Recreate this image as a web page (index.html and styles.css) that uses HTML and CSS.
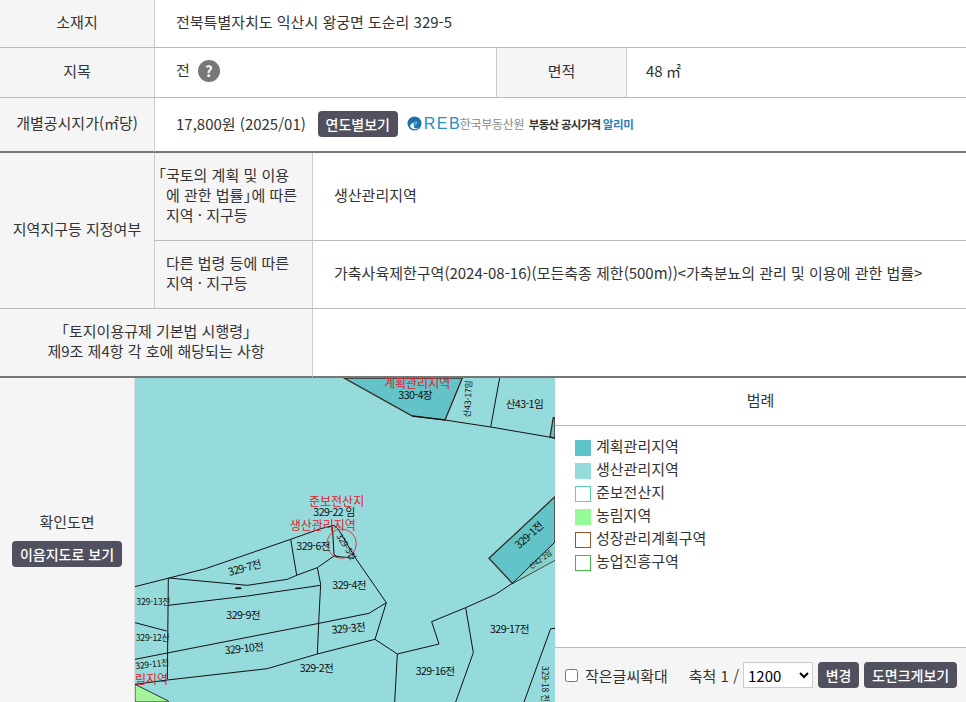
FILE: index.html
```html
<!DOCTYPE html>
<html lang="ko">
<head>
    <meta charset="UTF-8">
    <meta name="viewport" content="width=device-width, initial-scale=1.0">
    <title>토지이음</title>
    <link rel="stylesheet" href="styles.css">
</head>
<body>
    <table class="info info-top">
        <colgroup><col class="c1"><col class="c2"><col class="c3"><col></colgroup>
        <tr class="r1">
            <th>소재지</th>
            <td colspan="3">전북특별자치도 익산시 왕궁면 도순리 329-5</td>
        </tr>
        <tr class="r2">
            <th>지목</th>
            <td><span class="jimok">전</span><span class="help">?</span></td>
            <th>면적</th>
            <td class="last">48 ㎡</td>
        </tr>
        <tr class="r3">
            <th>개별공시지가(㎡당)</th>
            <td colspan="3">
                <div class="price">
                    <span>17,800원 (2025/01)</span>
                    <button class="btn btn-year">연도별보기</button>
                    <div class="logo">
                        <svg class="logo-mark" width="15" height="15" viewBox="0 0 30 30">
                            <circle cx="15" cy="15" r="14" fill="#1f6fa8"/>
                            <path d="M6 20c4-9 12-10 18-7-3-1-9 0-10 6s6 8 10 3c-3 6-14 7-18-2z" fill="#fff"/>
                            <circle cx="16" cy="15" r="4" fill="#3aa7d8"/>
                        </svg>
                        <span class="logo-reb">REB</span>
                        <span class="logo-name">한국부동산원</span>
                        <span class="logo-title">부동산 공시가격</span>
                        <span class="logo-blue">알리미</span>
                    </div>
                </div>
            </td>
        </tr>
    </table>

    <table class="info info-mid">
        <colgroup><col class="c1"><col class="c5"><col></colgroup>
        <tr class="r4">
            <th rowspan="2">지역지구등 지정여부</th>
            <th class="sub"><span class="hang">「</span>국토의 계획 및 이용<br>에 관한 법률<span class="tight">」</span>에 따른<br>지역 · 지구등</th>
            <td class="zone">생산관리지역</td>
        </tr>
        <tr class="r5">
            <th class="sub">다른 법령 등에 따른<br>지역 · 지구등</th>
            <td class="zone">가축사육제한구역(2024-08-16)(모든축종 제한(500m))&lt;가축분뇨의 관리 및 이용에 관한 법률&gt;</td>
        </tr>
        <tr class="r6">
            <th colspan="2">「토지이용규제 기본법 시행령」<br>제9조 제4항 각 호에 해당되는 사항</th>
            <td></td>
        </tr>
    </table>

    <div class="map-row">
        <div class="map-side">
            <div>확인도면</div>
            <button class="btn btn-side">이음지도로 보기</button>
        </div>
        <svg class="map" width="420" height="324" viewBox="3 6 1260 972">
            <rect x="3" y="6" width="1260" height="972" fill="#96dbdc"/>
            <!-- 계획관리지역 -->
            <polygon class="zone-dark" points="630,6 835,120 933,132 985,6"/>
            <polygon class="zone-dark" points="1065,547 1263,362 1263,552 1135,622"/>
            <polygon class="zone-sliver" points="1135,622 1263,498 1263,552"/>
            <polygon class="zone-dark" points="1258,125 1248,183 1263,187 1263,125"/>
            <polygon class="zone-green" points="3,925 103,975 103,978 3,978"/>
            <polyline class="edge" points="1135,622 1263,498"/>
            <!-- 필지 경계 -->
            <polyline class="lot" points="835,120 933,132 1070,153 1245,183 1263,186"/>
            <polyline class="lot" points="1097,6 1070,153"/>
            <polyline class="lot" points="3,632 105,606 215,578 470,490 560,458 600,448 612,458 665,547 757,680 723,790 790,834 915,804 893,737 995,695 1085,655 1135,622"/>
            <polyline class="lot" points="470,490 488,597"/>
            <polyline class="lot" points="105,606 340,628 460,610 490,597 550,575 600,540 660,547"/>
            <polyline class="lot" points="595,450 600,535 612,545"/>
            <polyline class="lot" points="550,575 560,625 555,720 550,834"/>
            <polyline class="lot" points="103,688 340,660 560,628"/>
            <polyline class="lot" points="103,606 100,910"/>
            <polyline class="lot" points="3,740 98,765"/>
            <polyline class="lot" points="3,850 555,742 705,712 757,680"/>
            <polyline class="lot" points="3,925 100,912 400,878 550,834 723,790"/>
            <polyline class="lot" points="790,834 782,978"/>
            <polyline class="lot" points="995,695 1018,830 965,978"/>
            <polyline class="lot" points="1263,757 1250,758 1170,978"/>
            <ellipse cx="313" cy="637" rx="10" ry="3" fill="#111"/>
            <circle class="mark" cx="623" cy="503" r="44"/>

            <text class="red" x="750" y="35">계획관리지역</text>
            <text class="red" x="525" y="390">준보전산지</text>
            <text class="red" x="467" y="463">생산관리지역</text>
            <text class="red" x="3" y="925">림지역</text>

            <text class="lbl" x="793" y="68">330-4장</text>
            <text class="lbl" x="538" y="420">329-22 임</text>
            <text class="lbl" x="487" y="521">329-6전</text>
            <text class="lbl" x="595" y="638">329-4전</text>
            <text class="lbl" x="277" y="728">329-9전</text>
            <text class="lbl" x="497" y="888">329-2전</text>
            <text class="lbl" x="845" y="897">329-16전</text>
            <text class="lbl" x="1068" y="770">329-17전</text>
            <text class="lbl" x="1115" y="95">산43-1임</text>
            <text class="lbl" transform="translate(286,600) rotate(-15)">329-7전</text>
            <text class="lbl" transform="translate(594,773) rotate(-5)">329-3전</text>
            <text class="lbl" transform="translate(273,835) rotate(-6)">329-10전</text>
            <text class="lbl" transform="translate(1155,520) rotate(-42)">329-1전</text>
            <text class="lbl-s" transform="translate(1008,125) rotate(-87)">산43-17임</text>
            <text class="lbl-s" transform="translate(606,480) rotate(58)">329-5전</text>
            <text class="lbl-xs" transform="translate(1192,580) rotate(-36)">산42-2임</text>
            <text class="lbl-s" transform="translate(1224,870) rotate(90)">329-18 전</text>
            <text class="lbl-s" x="7" y="686">329-13전</text>
            <text class="lbl-s" x="5" y="795">329-12산</text>
            <text class="lbl-s" transform="translate(5,880) rotate(-7)">329-11전</text>
        </svg>
        <div class="legend">
            <div class="legend-head">범례</div>
            <ul class="legend-list">
                <li><span class="swatch s-plan"></span>계획관리지역</li>
                <li><span class="swatch s-prod"></span>생산관리지역</li>
                <li><span class="swatch s-semi"></span>준보전산지</li>
                <li><span class="swatch s-forest"></span>농림지역</li>
                <li><span class="swatch s-growth"></span>성장관리계획구역</li>
                <li><span class="swatch s-farm"></span>농업진흥구역</li>
            </ul>
            <div class="legend-foot">
                <label class="small-text"><input type="checkbox">작은글씨확대</label>
                <span class="scale">축척 1 /</span>
                <select class="scale-select">
                    <option>1200</option>
                    <option>600</option>
                    <option>2400</option>
                </select>
                <button class="btn btn-change">변경</button>
                <button class="btn btn-large">도면크게보기</button>
            </div>
        </div>
    </div>
</body>
</html>
```

FILE: styles.css
```css
html, body {
    margin: 0;
    height: 702px;
    overflow: hidden;
}
body {
    font-family: "Noto Sans CJK KR", "Noto Sans", sans-serif;
    font-size: 15px;
    color: #333;
    background: #fff;
}
.info {
    width: 966px;
    table-layout: fixed;
    border-collapse: separate;
    border-spacing: 0;
}
.info th, .info td {
    box-sizing: border-box;
    padding: 0 0 3px;
    font-weight: 400;
    border-bottom: 1px solid #bbb;
    line-height: 20px;
}
.info th {
    background: #f5f5f6;
    border-right: 1px solid #ccc;
    text-align: center;
}
.info td {
    padding-left: 21px;
    border-right: 1px solid #ccc;
}
.info td:last-child {
    border-right: 0;
}
.info td.last {
    padding-left: 19px;
}
.c1 { width: 155px; }
.c2 { width: 342px; }
.c3 { width: 130px; }
.c5 { width: 158px; }
.r1 > * { height: 48px; }
.r2 > * { height: 50px; }
.r3 > * { height: 55px; border-bottom: 2px solid #777 !important; }
.r4 > * { height: 88px; }
.r5 > * { height: 68px; }
.r6 > * { height: 69px; border-bottom: 2px solid #777 !important; }
.info th.sub {
    text-align: left;
    padding-left: 11px;
}
.hang {
    display: inline-block;
    width: 15px;
    margin-left: -15px;
}
.tight {
    letter-spacing: -7px;
}
.jimok {
    margin-right: 8px;
}
.help {
    display: inline-flex;
    align-items: center;
    justify-content: center;
    width: 22px;
    height: 22px;
    border-radius: 50%;
    background: #777;
    color: #fff;
    font-weight: 700;
    font-size: 15px;
    vertical-align: middle;
}
.price {
    display: flex;
    align-items: center;
    padding-top: 1px;
}
.btn {
    border: 0;
    border-radius: 4px;
    background: #50505f;
    color: #fff;
    font-family: inherit;
    font-size: 14px;
    font-weight: 500;
    height: 26px;
    padding: 0;
    white-space: nowrap;
}
.btn-year {
    width: 80px;
    margin-left: 12px;
}
.logo {
    display: flex;
    align-items: center;
    margin-left: 9px;
    font-size: 12px;
    white-space: nowrap;
    letter-spacing: -0.3px;
}
.logo-reb {
    font-family: "Liberation Sans", sans-serif;
    font-size: 16px;
    letter-spacing: 1.5px;
    color: #2a8dc4;
    margin-left: 2px;
    width: 36px;
}
.logo-name {
    color: #8a8a8a;
    width: 69px;
}
.logo-title {
    color: #333;
    font-weight: 700;
    font-size: 11.5px;
    letter-spacing: -0.7px;
    width: 74px;
}
.logo-blue {
    color: #2a7fb8;
    font-weight: 700;
    font-size: 11.5px;
}
.map-row {
    display: flex;
    height: 324px;
}
.map-side {
    box-sizing: border-box;
    width: 135px;
    padding-bottom: 2px;
    background: #f5f5f6;
    border-right: 1px solid #ddd;
    display: flex;
    flex-direction: column;
    align-items: center;
    justify-content: center;
    gap: 9px;
}
.btn-side {
    width: 110px;
}
.map {
    display: block;
    flex: none;
}
.map text {
    font-family: "Noto Sans CJK KR", sans-serif;
}
.map .red {
    fill: #e0202e;
    font-size: 36px;
}
.map .lbl {
    fill: #111;
    font-size: 32px;
    letter-spacing: -1.8px;
}
.map .lbl-s {
    fill: #111;
    font-size: 26px;
    letter-spacing: -0.5px;
}
.map .lbl-xs {
    fill: #111;
    font-size: 21px;
    letter-spacing: -0.5px;
}
.zone-dark {
    fill: #62c3c8;
    stroke: #3a2a20;
    stroke-width: 4;
}
.zone-sliver {
    fill: #86d2c8;
}
.zone-green {
    fill: #a4f59a;
    stroke: #333;
    stroke-width: 3;
}
.edge, .lot {
    fill: none;
    stroke: #111;
    stroke-width: 3;
}
.mark {
    fill: none;
    stroke: #e0202e;
    stroke-width: 2.5;
}
.legend {
    flex: 1;
    min-width: 0;
    display: flex;
    flex-direction: column;
}
.legend-head {
    height: 48px;
    line-height: 44px;
    text-align: center;
    border-bottom: 1px solid #bbb;
    box-sizing: border-box;
    flex: none;
}
.legend-list {
    flex: 1;
    list-style: none;
    margin: 0;
    padding: 8px 0 0 20px;
}
.legend-list li {
    display: flex;
    align-items: center;
    height: 23px;
    gap: 5px;
    line-height: 20px;
}
.swatch {
    box-sizing: border-box;
    width: 16px;
    height: 16px;
    flex: none;
    margin-top: 4px;
}
.s-plan { background: #5fc4c9; }
.s-prod { background: #96dbdc; }
.s-semi { border: 1px solid #5fd0b0; }
.s-forest { background: #96fa96; }
.s-growth { border: 1px solid #96552d; }
.s-farm { border: 1px solid #46b446; }
.legend-foot {
    flex: none;
    height: 55px;
    box-sizing: border-box;
    background: #f5f5f6;
    border-top: 1px solid #bbb;
    display: flex;
    align-items: center;
    padding-left: 10px;
}
.small-text {
    display: flex;
    align-items: center;
}
.small-text input {
    margin: 0 7px 0 0;
    width: 13px;
    height: 13px;
}
.scale {
    margin-left: 21px;
}
.scale-select {
    box-sizing: border-box;
    width: 70px;
    height: 26px;
    margin-left: 4px;
    background: #fff;
    border: 1px solid #ccc;
    font-family: inherit;
    font-size: 15px;
    padding-left: 0;
}
.btn-change {
    margin-left: 5px;
    width: 41px;
}
.btn-large {
    margin-left: 5px;
    width: 93px;
}
```
